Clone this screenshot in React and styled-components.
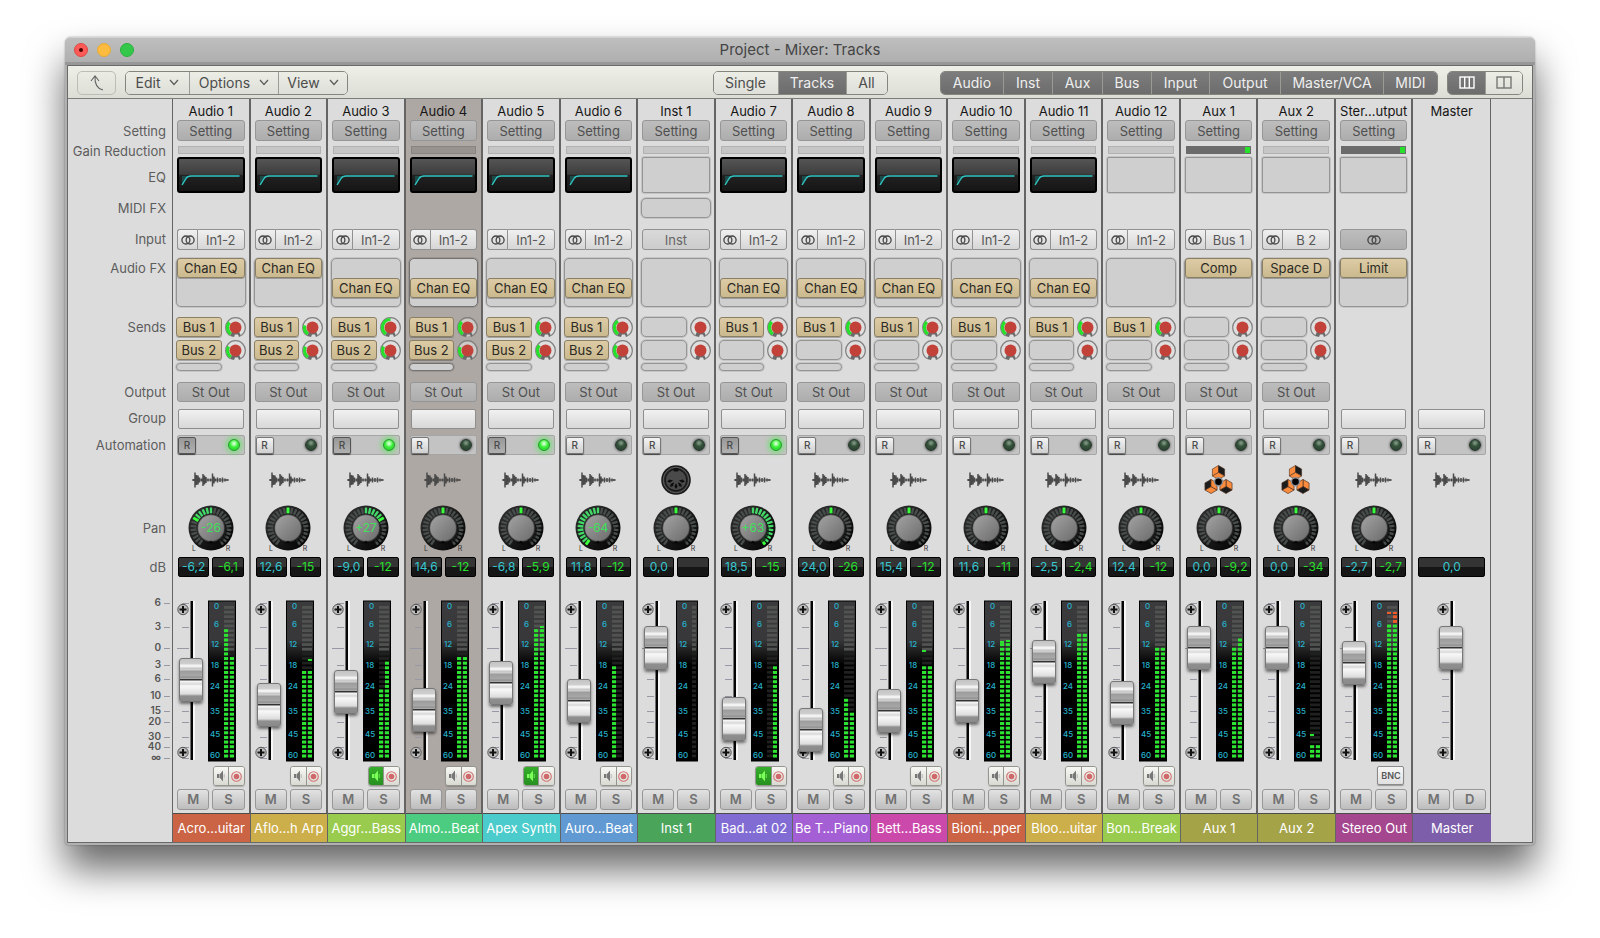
import React, {useState} from 'react';
import styled, {createGlobalStyle, css} from 'styled-components';

const colors = {
  panel: '#dcdcdc',
  selected: '#aea8a4',
  line: '#646464',
  text: '#4f4f4f',
  label: '#5c5c5c',
  cyan: '#35c6cf',
  green: '#26e02c'
};

const FONT = "Inter, 'Liberation Sans', Arial, sans-serif";

// one height per mixer row, shared by the label column and every strip
const ROWS = '21px 21px 16px 36px 31px 31px 57px 65px 29px 26px 28px 40px 55px 45px 162px 27px 24px 29px';

const GlobalStyle = createGlobalStyle`
  * { box-sizing: border-box; }
  body { margin: 0; background: #fff; font-family: ${FONT}; }
  button { font: inherit; padding: 0; margin: 0; cursor: pointer; }
  svg { display: block; flex: none; }
`;

const Page = styled.main`
  padding: 37px 65px 93px;
`;

const Window = styled.section`
  padding: 0 2px 2px;
  border-radius: 6px 6px 4px 4px;
  background: #b0b0b0;
  box-shadow: 0 0 2px rgba(0, 0, 0, 0.35), 0 24px 38px rgba(0, 0, 0, 0.6);
`;

const TitleBar = styled.header`
  display: grid;
  grid-template-columns: 1fr auto 1fr;
  align-items: center;
  height: 28px;
  margin: 0 -2px;
  padding: 0 9px;
  border-radius: 6px 6px 0 0;
  border-top: 1px solid #d2d2d2;
  border-bottom: 3px solid #979797;
  background: linear-gradient(#bebebe, #afafaf);
`;

const Title = styled.h1`
  margin: 0;
  font-size: 15px;
  line-height: 20px;
  font-weight: 400;
  color: #454545;
`;

const Lights = styled.div`
  display: flex;
  gap: 9px;
`;

const Light = styled.button`
  display: flex;
  align-items: center;
  justify-content: center;
  width: 14px;
  height: 14px;
  border: 1px solid ${(props) => props.$edge};
  border-radius: 50%;
  background: ${(props) => props.$color};
`;

const LightDot = styled.span`
  width: 4px;
  height: 4px;
  border-radius: 50%;
  background: #4a0303;
`;

const Content = styled.div`
  border: 1px solid #6a6a6a;
  background: ${colors.panel};
`;

const Toolbar = styled.nav`
  display: grid;
  grid-template-columns: 1fr auto 1fr;
  align-items: center;
  height: 33px;
  padding: 1px 9px 0;
  border-bottom: 1px solid #7c7c7c;
  background: linear-gradient(#eef0e8, #dcddd5);
`;

const ToolSide = styled.div`
  display: flex;
  gap: 9px;
  justify-content: ${(props) => (props.$end ? 'flex-end' : 'flex-start')};
`;

const Group = styled.div`
  display: flex;
  height: 24px;
  overflow: hidden;
  border: 1px solid #85857f;
  border-radius: 5px;
`;

const GroupButton = styled.button`
  display: flex;
  align-items: center;
  justify-content: center;
  gap: 9px;
  width: ${(props) => props.$w}px;
  border: 0;
  border-left: 1px solid #9b9b95;
  background: ${(props) => (props.$on ? 'linear-gradient(#7d7d7d, #6c6c6c)' : 'linear-gradient(#eceee6, #dedfd8)')};
  color: ${(props) => (props.$on ? '#efefef' : '#4c4c4c')};
  font-size: 14px;
  line-height: 20px;
  white-space: nowrap;

  &:first-child { border-left: 0; }
`;

const BackButton = styled.button`
  display: flex;
  align-items: center;
  justify-content: center;
  width: 39px;
  height: 24px;
  border: 1px solid #bcbdb6;
  border-radius: 5px;
  background: transparent;
`;

const Mixer = styled.div`
  display: grid;
  grid-template-columns: 105px repeat(17, minmax(0, 1fr)) 41px;
`;

const LabelColumn = styled.div`
  display: grid;
  grid-template-rows: ${ROWS};
  border-right: 1px solid ${colors.line};
`;

const RowLabel = styled.div`
  padding-right: 6px;
  padding-top: ${(props) => props.$top || 0}px;
  color: ${colors.label};
  font-size: 13px;
  line-height: 21px;
  text-align: right;
  white-space: nowrap;
`;

const Strip = styled.section`
  display: grid;
  grid-template-rows: ${ROWS};
  grid-template-columns: minmax(0, 1fr);
  min-width: 0;
  border-right: 2px solid ${colors.line};
  background: ${(props) => (props.$selected ? colors.selected : colors.panel)};
  --slot-line: ${(props) => (props.$selected ? '#727272' : '#949494')};
  --gr: ${(props) => (props.$selected ? '#99938f' : '#c6c6c6')};

  &:nth-last-child(2) { border-right-width: 1px; }
`;

const Cell = styled.div`
  display: flex;
  justify-content: ${(props) => props.$justify || 'stretch'};
  align-items: ${(props) => props.$align || 'flex-start'};
  gap: ${(props) => props.$gap || 0}px;
  min-width: 0;
  padding: ${(props) => props.$top || 0}px ${(props) => props.$side || 4}px 0;
`;

const StripName = styled.h2`
  flex: 1;
  margin: 0;
  padding-top: 2px;
  font-size: 13px;
  line-height: 21px;
  font-weight: 400;
  color: #161616;
  text-align: center;
  white-space: nowrap;
`;

const tones = {
  dark: css`
    border: 1px solid #969696;
    background: linear-gradient(#bdbdbd, #adadad);
    color: ${colors.text};
  `,
  light: css`
    border: 1px solid #919191;
    background: linear-gradient(#f0f0f0, #d6d6d6);
    color: #585858;
  `,
  gold: css`
    border: 1px solid #8b7f63;
    background: linear-gradient(#dccba5, #cbb98f);
    box-shadow: 0 1px 0 rgba(0, 0, 0, 0.25);
    color: #2c2a24;
  `,
  flat: css`
    border: 1px solid #919191;
    background: linear-gradient(#d9d9d9, #cccccc);
    color: #666;
  `
};

const Button = styled.button`
  display: flex;
  flex: 1;
  align-items: center;
  justify-content: center;
  min-width: 0;
  height: ${(props) => props.$h || 21}px;
  border-radius: 3px;
  font-size: 13px;
  line-height: 16px;
  white-space: nowrap;
  ${(props) => tones[props.$tone]}
`;

const InputPair = styled.div`
  display: flex;
  flex: 1;

  ${Button}:first-child {
    flex: 0 0 20px;
    border-right: 0;
    border-radius: 3px 0 0 3px;
  }
  ${Button}:last-child { border-radius: 0 3px 3px 0; }
`;

const Reduction = styled.div`
  display: flex;
  flex: 1;
  justify-content: flex-end;
  height: 8px;
  border: 1px solid ${(props) => (props.$active ? '#6b6b6b' : 'rgba(0, 0, 0, 0.1)')};
  background: ${(props) => (props.$active ? '#6b6b6b' : 'var(--gr)')};
`;

const ReductionLevel = styled.span`
  width: 5px;
  background: ${colors.green};
`;

const EqFrame = styled.button`
  flex: 1;
  height: 36px;
  overflow: hidden;
  border: 2px solid #000;
  border-radius: 3px;
  background: linear-gradient(#555 0%, #3d3d3d 48%, #222 50%, #151515 100%);

  svg { width: 100%; }
`;

const Empty = styled.button`
  flex: 1;
  height: ${(props) => props.$h}px;
  border: 1px solid var(--slot-line);
  border-radius: ${(props) => props.$r || 5}px;
  box-shadow: 0 0 0 1px rgba(0, 0, 0, 0.1);
  background: #cfcfcf;
`;

const FxSlot = styled.div`
  display: flex;
  flex-direction: column;
  flex: 1;
  height: 49px;
  border: 1px solid var(--slot-line);
  border-radius: 5px;
  box-shadow: 0 0 0 1px rgba(0, 0, 0, 0.1);
  padding-top: ${(props) => (props.$second ? 20 : 0)}px;
  background: #cfcfcf;

  ${Button} {
    flex: none;
    margin-top: -1px;
  }
`;

const Sends = styled.div`
  display: grid;
  flex: 1;
  grid-template-columns: minmax(0, 1fr) 21px;
  grid-template-rows: 20px 20px 9px;
  gap: 3px;

  > * { width: 100%; }
`;

const GroupBox = styled.button`
  flex: 1;
  height: 20px;
  border: 1px solid #8e8e8e;
  border-radius: 2px;
  background: linear-gradient(#f1f1f1, #d8d8d8);
`;

const AutoBox = styled.div`
  display: flex;
  flex: 1;
  align-items: center;
  justify-content: space-between;
  height: 20px;
  padding: 0 4px 0 0;
  border: 1px solid #a5a5a5;
  border-radius: 2px;
  background: #c3c3c3;
`;

const AutoButton = styled.button`
  width: 18px;
  height: 17px;
  border: 1px solid ${(props) => (props.$on ? '#555' : '#777')};
  border-radius: 2px;
  box-shadow: 0 1px 1px rgba(0, 0, 0, 0.6);
  background: ${(props) => (props.$on ? 'linear-gradient(#999, #b0b0b0)' : 'linear-gradient(#f4f4f4, #cfcfcf)')};
  color: #4a4a4a;
  font-size: 10px;
  font-weight: 500;
  line-height: 14px;
`;

const Led = styled.span`
  width: 12px;
  height: 12px;
  border: 1px solid ${(props) => (props.$on ? '#249a2a' : '#24332a')};
  border-radius: 50%;
  background: ${(props) =>
    props.$on
      ? 'radial-gradient(circle at 50% 35%, #c8ffc4 0 12%, #3df03c 45%, #20c526 100%)'
      : 'radial-gradient(circle at 50% 30%, #79907d 0 10%, #35523b 40%, #263c2b 100%)'};
  box-shadow: ${(props) => (props.$on ? '0 0 5px 2px rgba(70, 240, 70, 0.6)' : '0 0 2px 1px rgba(90, 90, 90, 0.6)')};
`;

const Readout = styled.output`
  flex: 1;
  min-width: 0;
  height: 20px;
  border: 1px solid #000;
  border-radius: 2px;
  background: linear-gradient(#343434 50%, #161616 50%);
  color: ${(props) => (props.$peak ? colors.green : colors.cyan)};
  font-size: 12px;
  line-height: 18px;
  text-align: center;
  white-space: nowrap;
`;

const FaderRow = styled.div`
  display: flex;
  justify-content: center;
  min-width: 0;
`;

const FaderWell = styled.label`
  position: relative;
  flex: none;
  width: 32px;
  height: 162px;
`;

const thumb = css`
  width: 24px;
  height: 44px;
  border: 1px solid #777;
  border-radius: 3px;
  box-shadow: 0 2px 3px rgba(0, 0, 0, 0.5);
  background: linear-gradient(
    #c4c4c4 0, #cfcfcf 5px, #f4f4f4 6px, #f0f0f0 8px, #c6c6c6 9px, #d0d0d0 11px,
    #9c9c9c 12px, #a8a8a8 17px, #8e8e8e 18px, #b2b2b2 20px, #333 20px, #333 21px,
    #fafafa 22px, #d8d8d8 25px, #f8f8f8 27px, #e8e8e8 32px, #dcdcdc 35px,
    #8f8f8f 37px, #8a8a8a 100%
  );
`;

// the thumb's centre runs over the scale, so the input is half a thumb longer at each end
const FaderInput = styled.input`
  position: absolute;
  top: -19px;
  left: 3px;
  width: 24px;
  height: 198px;
  margin: 0;
  appearance: none;
  background: transparent;
  writing-mode: vertical-lr;
  direction: rtl;

  &::-webkit-slider-runnable-track { width: 24px; background: transparent; }
  &::-webkit-slider-thumb { appearance: none; ${thumb} }
  &::-moz-range-thumb { ${thumb} }
`;

const MeterSlot = styled.div`
  display: flex;
  flex: none;
  justify-content: center;
  width: 28px;
  margin-right: 9px;
`;

const MonitorPair = styled.div`
  display: flex;
  width: 32px;
  height: 20px;
  overflow: hidden;
  border: 1px solid #95958f;
  border-radius: 3px;
  box-shadow: 0 1px 1px rgba(0, 0, 0, 0.2);
`;

const MonitorButton = styled.button`
  display: flex;
  flex: 1;
  align-items: center;
  justify-content: center;
  border: 0;
  background: ${(props) => (props.$on ? 'linear-gradient(#35ad2a, #279020)' : 'linear-gradient(#f7f7f4, #dadad3)')};

  & + & { border-left: 1px solid #95958f; }
`;

const BounceButton = styled.button`
  width: 27px;
  height: 19px;
  margin-right: 3px;
  border: 1px solid #8a8a8a;
  border-radius: 2px;
  box-shadow: 0 1px 1px rgba(0, 0, 0, 0.3);
  background: linear-gradient(#f7f7f7, #e0e0e0);
  color: #555;
  font-size: 9px;
  font-weight: 600;
  line-height: 14px;
`;

const MuteButton = styled.button`
  flex: 1;
  height: 21px;
  border: 1px solid #979797;
  border-radius: 3px;
  background: linear-gradient(#e2e2e2, #bdbdbd);
  color: #717171;
  font-size: 13px;
  font-weight: 600;
  line-height: 19px;
`;

const Plate = styled.div`
  margin-right: -1px;
  border-top: 1px solid #4c4c4c;
  background: ${(props) => props.$color};
  color: #fff;
  font-size: 13px;
  line-height: 28px;
  text-align: center;
  white-space: nowrap;
`;

/* Drawings */

const Chevron = () => (
  <svg width="10" height="7" viewBox="0 0 10 7" fill="none" stroke="#5a5a5a" strokeWidth="1.2">
    <path d="M1 1l4 4.5L9 1" />
  </svg>
);

const BackArrow = () => (
  <svg width="14" height="16" viewBox="0 0 14 16" fill="none" stroke="#666" strokeWidth="1.1">
    <path d="M1 6L5 1l4 5M5 1c-.4 7 1 12.500 8 14" />
  </svg>
);

const Columns = ({count, color}) => (
  <svg width="16" height="13" viewBox="0 0 16 13" fill="none" stroke={color} strokeWidth="1.4">
    <rect x="1" y="1" width="14" height="11" />
    {count === 3 ? <path d="M5.700 1v11M10.300 1v11" /> : <path d="M8 1v11" />}
  </svg>
);

const StereoIcon = () => (
  <svg width="14" height="10" viewBox="0 0 14 10" fill="none" stroke="#444" strokeWidth="1.3">
    <circle cx="4.900" cy="5" r="4" />
    <circle cx="9.100" cy="5" r="4" />
  </svg>
);

const EqCurve = () => (
  <svg height="32" viewBox="0 0 63 32" preserveAspectRatio="none">
    <path d="M3 17h7q-2 1-6 9H3z" fill="#1c4a49" />
    <path d="M3 26L7 19.500Q8.500 17 12 17H60" fill="none" stroke="#2fc4c2" strokeWidth="1.400" />
  </svg>
);

const WAVE = [
  [1.5, 1], [3, 7.5], [4.5, 5], [6, 4.5], [7.5, 2.5], [9.5, 1.5], [11, 6], [12.5, 4.5], [14, 3], [16, 1.5],
  [18.5, 1.5], [20.5, 6.5], [22, 3.5], [23.5, 1.5], [25.5, 2.5], [28, 2], [30.5, 2.5], [33, 1.5], [35, 1]
];

const WaveIcon = () => (
  <svg width="38" height="16" viewBox="0 0 38 16" stroke="#4a4a4a">
    <path d="M0 8h37" strokeWidth="1.200" />
    <path d={WAVE.map(([x, h]) => `M${x} ${8 - h}v${h * 2}`).join('')} strokeWidth="1.500" />
  </svg>
);

const PINS = [-80, -40, 0, 40, 80];

const MidiIcon = () => (
  <svg width="30" height="30" viewBox="-15 -15 30 30">
    <circle r="14.800" fill="#1a1a1a" />
    <circle r="12.800" fill="#333" stroke="#6a6a6a" strokeWidth="0.800" />
    <circle r="10.800" fill="#4a4a4a" stroke="#161616" strokeWidth="1.200" />
    <rect x="-2.500" y="-12" width="5" height="3.500" rx="1" fill="#111" />
    {PINS.map((a) => (
      <path key={a} d="M0 3L1.600 6.500 0 9-1.600 6.500z" fill="#0d0d0d" transform={`rotate(${a})`} />
    ))}
  </svg>
);

const Cube = ({x, y, turn}) => (
  <g transform={`translate(${x} ${y}) rotate(${turn})`} stroke="#4d3020" strokeWidth="0.600" strokeLinejoin="round">
    <path d="M0 0V-7L-6.100-3.500V3.500z" fill="#fb8b3d" />
    <path d="M0 0V-7L6.100-3.500V3.500z" fill="#1c1c1c" />
    <path d="M0 0L6.100 3.500 0 7-6.100 3.500z" fill="#fb8b3d" />
  </g>
);

const CubesIcon = () => (
  <svg width="30" height="30" viewBox="0 0 30 30">
    <Cube x={14.5} y={7.5} turn={0} />
    <Cube x={22} y={21.5} turn={120} />
    <Cube x={7} y={21.5} turn={240} />
    <circle cx="14.500" cy="16.800" r="4" fill="#000" stroke="#8b8f96" strokeWidth="1.400" />
  </svg>
);

const icons = {wave: WaveIcon, midi: MidiIcon, cubes: CubesIcon};

const polar = (r, deg) => {
  const a = (deg * Math.PI) / 180;
  return [(r * Math.sin(a)).toFixed(2), (-r * Math.cos(a)).toFixed(2)];
};

const arc = (r, from, to) =>
  `M${polar(r, from).join(' ')}A${r} ${r} 0 ${to - from > 180 ? 1 : 0} 1 ${polar(r, to).join(' ')}`;

const SendKnob = ({level, name}) => (
  <svg width="21" height="21" viewBox="-10.500 -10.500 21 21" role="img" aria-label={name}>
    <circle r="9" fill="rgba(225,225,225,.6)" />
    <path d={arc(9.8, -145, 145)} fill="none" stroke="#7f7f7f" strokeWidth="1.200" />
    <path d="M-5.500 8.500L-3.500 4h7l2 4.500-2 1-1-2.500h-3l-1 2.500z" fill="#6a6a6a" />
    {level !== undefined && <path d={arc(8, -145, level)} fill="none" stroke={colors.green} strokeWidth="3.200" />}
    <circle r="6" fill="#c2423a" />
  </svg>
);

const TICKS = Array.from({length: 25}, (_, i) => (i - 12) * 12);

const tickColor = (tick, target) => {
  if (tick === target) return '#39ff3c';
  const lit = target < 0 ? tick > target && tick <= 0 : tick < target && tick >= 0;
  return lit ? '#43d868' : '#474d4a';
};

const PanKnob = ({value = 0}) => {
  const target = Math.max(-144, Math.min(144, Math.round((value * 2.3) / 12) * 12));
  return (
    <svg width="46" height="52" viewBox="-23 -26 46 52" role="img" aria-label={`Pan ${value}`}>
      <defs>
        <linearGradient id="cap" x1="0" y1="0" x2="1" y2="1">
          <stop offset="0" stopColor="#a3a3a3" />
          <stop offset="1" stopColor="#6c6c6c" />
        </linearGradient>
        <linearGradient id="rim" x1="0" y1="0" x2="1" y2="1">
          <stop offset="0" stopColor="#333" />
          <stop offset="0.600" stopColor="#161616" />
          <stop offset="1" stopColor="#000" />
        </linearGradient>
      </defs>
      <circle r="22.500" fill="url(#rim)" />
      {TICKS.map((tick) => (
        <rect
          key={tick}
          x={tick === target ? -1.5 : -1.2}
          y="-20.500"
          width={tick === target ? 3 : 2.4}
          height="6"
          rx="0.500"
          fill={tickColor(tick, target)}
          transform={`rotate(${tick})`}
        />
      ))}
      <circle cx="2" cy="2.500" r="14" fill="#0c0c0c" opacity="0.700" />
      <circle r="14" fill="#5b5b5b" stroke="#222" strokeWidth="0.800" />
      <circle r="12.800" fill="url(#cap)" />
      <path d="M-2 15L0 12.500 2 15z" fill="#000" />
      {value !== 0 && (
        <text y="4" textAnchor="middle" fontSize="12" fill="#3fe05c">
          {value > 0 ? `+${value}` : value}
        </text>
      )}
      <text x="-17" y="23" textAnchor="middle" fontSize="7" fill="#333">L</text>
      <text x="17" y="23" textAnchor="middle" fontSize="7" fill="#333">R</text>
    </svg>
  );
};

const SCALE = [
  ['6', 3], ['3', 27], ['0', 48], ['3', 65], ['6', 79], ['10', 96], ['15', 111], ['20', 122], ['30', 137],
  ['40', 147], ['∞', 158]
];

const ScaleDrawing = styled.svg`
  margin-top: -8px;
`;

const DbScale = () => (
  <ScaleDrawing width="104" height="178" viewBox="0 -8 104 178">
    {SCALE.map(([text, y], i) => (
      <g key={i}>
        <text x="93" y={y + 3} textAnchor="end" fontSize="10" fontWeight="600" fill="#555">{text}</text>
        <path d={`M96 ${y + 0.5}h6`} stroke="#9898a4" />
      </g>
    ))}
  </ScaleDrawing>
);

const Screw = ({y}) => (
  <g transform={`translate(7 ${y})`}>
    <circle r="5.200" fill="#bdbdbd" stroke="#555" />
    <path d="M0-3.500v7M-3.500 0h7" stroke="#111" strokeWidth="2" />
  </g>
);

const FaderTrack = () => (
  <svg width="32" height="162" viewBox="0 0 32 162">
    {SCALE.map(([, y], i) => (
      <path key={i} d={`M${i === 2 ? 1 : 6} ${y + 0.5}H13`} stroke="#9898a4" />
    ))}
    <rect x="17" y="1" width="2" height="159" fill="#f7f7f7" />
    <rect x="14.500" y="1" width="2.500" height="159" fill="#050505" />
    <Screw y={9.5} />
    <Screw y={152.5} />
  </svg>
);

const METER = [[0, 6], [6, 24], [12, 44], [18, 65], [24, 86], [35, 111], [45, 134], [60, 155]];
const SEGMENTS = Array.from({length: 33}, (_, i) => 154.5 - i * 4.64);

// levels are distances from the top of the meter to the top of the bar
const Bar = ({x, level, peak}) => (
  <g>
    {level !== undefined && SEGMENTS.filter((y) => y > level - 2).map((y) => (
      <rect key={y} x={x} y={y} width="4" height="3" fill={y < 24 ? '#f0592a' : '#2be531'} />
    ))}
    {peak !== undefined && <rect x={x} y={peak - 1} width="4" height="2" fill={peak < 24 ? '#f0592a' : '#2be531'} />}
  </g>
);

const Meter = ({mono, left = [], right = []}) => {
  const width = mono ? 22 : 28;
  return (
    <svg width={width} height="162" viewBox={`0 0 ${width} 162`}>
      <defs>
        <linearGradient id="well" x1="0" y1="0" x2="0" y2="1">
          <stop offset="0" stopColor="#3b3b3d" />
          <stop offset="0.240" stopColor="#38383a" />
          <stop offset="0.400" stopColor="#000" />
        </linearGradient>
      </defs>
      <rect x="0.500" y="1" width={width - 1} height="160" fill="url(#well)" stroke="#000" />
      {SEGMENTS.map((y) => (
        <rect key={y} x="16" y={y} width={mono ? 4 : 10} height="2.800" fill={y < 50 ? '#505350' : '#1f211f'} />
      ))}
      <Bar x={16} level={left[0]} peak={left[1]} />
      {!mono && <Bar x={22} level={right[0]} peak={right[1]} />}
      {METER.map(([db, y]) => (
        <text
          key={db}
          x={db < 10 ? 8.5 : 7}
          y={y + 3}
          textAnchor="middle"
          fontSize="8"
          fontWeight="500"
          fill="#25b3cd"
        >
          {db}
        </text>
      ))}
    </svg>
  );
};

const Speaker = ({on}) => (
  <svg width="8" height="12" viewBox="0 0 8 12" fill={on ? '#7dff5a' : '#777'}>
    <path d="M0 4h2.500v4H0zM3 4L6 .5v11L3 8z" />
    <path d="M7.200 4v4" stroke={on ? '#7dff5a' : '#aaa'} strokeWidth="0.800" />
  </svg>
);

const Record = () => (
  <svg width="11" height="11" viewBox="-5.500 -5.500 11 11">
    <circle r="4.800" fill="none" stroke="#d27272" strokeWidth="1.100" />
    <circle r="2.800" fill="#cf6868" />
  </svg>
);

/* Data */

const STRIPS = [
  {name: 'Audio 1', track: 'Acro...uitar', color: '#cb6444', fx: 'Chan EQ', sends: [-50, -60], read: true, pan: -26, gain: '-6,2', peak: '-6,1', fader: 77, left: [27], right: [58]},
  {name: 'Audio 2', track: 'Aflo...h Arp', color: '#ccae4a', fx: 'Chan EQ', sends: [-75, -62], gain: '12,6', peak: '-15', fader: 52, left: [72], right: [71, 60]},
  {name: 'Audio 3', track: 'Aggr...Bass', color: '#98cb4e', fx: 'Chan EQ', low: true, sends: [0, -60], read: true, pan: 27, gain: '-9,0', peak: '-12', fader: 65, left: [91], right: [63]},
  {name: 'Audio 4', track: 'Almo...Beat', color: '#4ccc80', fx: 'Chan EQ', low: true, sends: [-45, -65], gain: '14,6', peak: '-12', fader: 47, left: [58], right: [59], selected: true},
  {name: 'Audio 5', track: 'Apex Synth', color: '#4bcbcb', fx: 'Chan EQ', low: true, sends: [-45, -50], read: true, gain: '-6,8', peak: '-5,9', fader: 74, left: [31], right: [31, 27]},
  {name: 'Audio 6', track: 'Auro...Beat', color: '#6199d3', fx: 'Chan EQ', low: true, sends: [-35, -50], pan: -64, gain: '11,8', peak: '-12', fader: 56, left: [68]},
  {name: 'Inst 1', track: 'Inst 1', color: '#4aa45a', kind: 'inst', input: 'Inst', icon: 'midi', sends: [], gain: '0,0', peak: '', fader: 109},
  {name: 'Audio 7', track: 'Bad...at 02', color: '#816cd4', fx: 'Chan EQ', low: true, sends: [-45], read: true, pan: 63, gain: '18,5', peak: '-15', fader: 38, right: [67]},
  {name: 'Audio 8', track: 'Be T...Piano', color: '#a55fd5', fx: 'Chan EQ', low: true, sends: [-45], gain: '24,0', peak: '-26', fader: 27, left: [100], right: [111]},
  {name: 'Audio 9', track: 'Bett...Bass', color: '#cc49ac', fx: 'Chan EQ', low: true, sends: [-45], gain: '15,4', peak: '-12', fader: 46, left: [67, 51], right: [67]},
  {name: 'Audio 10', track: 'Bioni...pper', color: '#cb6444', fx: 'Chan EQ', low: true, sends: [-45], gain: '11,6', peak: '-11', fader: 56, left: [45, 42], right: [45, 41]},
  {name: 'Audio 11', track: 'Bloo...uitar', color: '#ccae4a', fx: 'Chan EQ', low: true, sends: [-45], gain: '-2,5', peak: '-2,4', fader: 95, left: [35], right: [35]},
  {name: 'Audio 12', track: 'Bon...Break', color: '#98cb4e', sends: [-45], gain: '12,4', peak: '-12', fader: 54, left: [49], right: [49]},
  {name: 'Aux 1', track: 'Aux 1', color: '#a5a348', kind: 'aux', input: 'Bus 1', icon: 'cubes', fx: 'Comp', sends: [], gain: '0,0', peak: '-9,2', fader: 109, left: [49], right: [39], reducing: true},
  {name: 'Aux 2', track: 'Aux 2', color: '#a5a348', kind: 'aux', input: 'B 2', icon: 'cubes', fx: 'Space D', sends: [], gain: '0,0', peak: '-34', fader: 109, left: [144, 135], right: [144]},
  {name: 'Ster...utput', track: 'Stereo Out', color: '#a4478f', kind: 'output', fx: 'Limit', gain: '-2,7', peak: '-2,7', fader: 94, left: [22, 13], right: [17, 13], reducing: true},
  {name: 'Master', track: 'Master', color: '#7c5eab', kind: 'master', gain: '0,0', fader: 109}
];

const MONITORED = ['Audio 3', 'Audio 5', 'Audio 7'];

const LABELS = [
  ['', 0], ['Setting', 1], ['Gain Reduction', -1], ['EQ', 10], ['MIDI FX', 5], ['Input', 5], ['Audio FX', 3],
  ['Sends', 5], ['Output', 5], ['Group', 2], ['Automation', 3], ['', 0], ['Pan', 18], ['dB', 2]
];

/* Parts */

const InputCell = ({kind = 'audio', input = 'In1-2'}) => {
  if (kind === 'inst') return <Button $tone="flat">{input}</Button>;
  if (kind === 'output') return <Button $tone="dark" aria-label="Stereo format"><StereoIcon /></Button>;
  return (
    <InputPair>
      <Button $tone="light" aria-label="Stereo format"><StereoIcon /></Button>
      <Button $tone="light">{input}</Button>
    </InputPair>
  );
};

const SendsCell = ({sends}) => (
  <Sends>
    {[0, 1].map((i) => (
      <React.Fragment key={i}>
        {sends[i] === undefined
          ? <Empty $h={20} aria-label={`Empty send ${i + 1}`} />
          : <Button $tone="gold" $h={20}>Bus {i + 1}</Button>}
        <SendKnob level={sends[i]} name={`Send ${i + 1} level`} />
      </React.Fragment>
    ))}
    <Empty $h={8} aria-label="Add send" />
  </Sends>
);

const Fader = ({name, start}) => {
  const [value, setValue] = useState(start);
  return (
    <FaderWell>
      <FaderTrack />
      <FaderInput
        type="range"
        min="0"
        max="154"
        value={value}
        aria-label={`${name} volume`}
        onChange={(e) => setValue(Number(e.target.value))}
      />
    </FaderWell>
  );
};

const ChannelStrip = ({channel}) => {
  const {name, kind = 'audio', icon = 'wave', fx, sends, selected} = channel;
  const Icon = icons[icon];
  const isMaster = kind === 'master';
  const hasEq = kind === 'audio' && fx;

  return (
    <Strip $selected={selected} aria-label={name}>
      <Cell><StripName>{name}</StripName></Cell>
      <Cell>{!isMaster && <Button $tone="dark">Setting</Button>}</Cell>
      <Cell $top={5} $side={5}>
        {!isMaster && <Reduction $active={channel.reducing}>{channel.reducing && <ReductionLevel />}</Reduction>}
      </Cell>
      <Cell>
        {hasEq && <EqFrame aria-label="Channel EQ"><EqCurve /></EqFrame>}
        {!hasEq && !isMaster && <Empty $h={36} $r={2} aria-label="Empty EQ" />}
      </Cell>
      <Cell $top={5} $side={3}>{kind === 'inst' && <Empty $h={20} aria-label="Empty MIDI effect" />}</Cell>
      <Cell $top={5}>{!isMaster && <InputCell kind={kind} input={channel.input} />}</Cell>
      <Cell $top={3} $side={3}>
        {!isMaster && (
          <FxSlot $second={channel.low}>
            {fx && <Button $tone="gold" $h={20}>{fx}</Button>}
          </FxSlot>
        )}
      </Cell>
      <Cell $top={5} $side={3}>{sends && <SendsCell sends={sends} />}</Cell>
      <Cell $top={5}>{sends && <Button $tone="dark" $h={20}>St Out</Button>}</Cell>
      <Cell $top={3} $side={5}><GroupBox aria-label="Group" /></Cell>
      <Cell $top={3}>
        <AutoBox>
          <AutoButton $on={channel.read} aria-pressed={Boolean(channel.read)}>R</AutoButton>
          <Led $on={channel.read} />
        </AutoBox>
      </Cell>
      <Cell $justify="center" $align="center"><Icon /></Cell>
      <Cell $justify="center" $align="center">{!isMaster && <PanKnob value={channel.pan} />}</Cell>
      <Cell $top={2} $side={5} $gap={3}>
        <Readout>{channel.gain}</Readout>
        {!isMaster && <Readout $peak>{channel.peak}</Readout>}
      </Cell>
      <FaderRow>
        <Fader name={name} start={channel.fader} />
        {!isMaster && (
          <MeterSlot>
            <Meter mono={kind === 'inst'} left={channel.left} right={channel.right} />
          </MeterSlot>
        )}
      </FaderRow>
      <Cell $top={4} $justify="flex-end">
        {kind === 'audio' && (
          <MonitorPair>
            <MonitorButton $on={MONITORED.includes(name)} aria-label="Input monitoring">
              <Speaker on={MONITORED.includes(name)} />
            </MonitorButton>
            <MonitorButton aria-label="Record enable"><Record /></MonitorButton>
          </MonitorPair>
        )}
        {kind === 'output' && <BounceButton>BNC</BounceButton>}
      </Cell>
      <Cell $gap={3}>
        <MuteButton>M</MuteButton>
        <MuteButton>{isMaster ? 'D' : 'S'}</MuteButton>
      </Cell>
      <Plate $color={channel.color}>{channel.track}</Plate>
    </Strip>
  );
};

const MENUS = [['Edit', 63], ['Options', 89], ['View', 69]];
const MODES = [['Single', 64], ['Tracks', 68], ['All', 41]];
const FILTERS = [
  ['Audio', 62], ['Inst', 49], ['Aux', 50], ['Bus', 49], ['Input', 58], ['Output', 71], ['Master/VCA', 103], ['MIDI', 54]
];

const App = () => {
  const [mode, setMode] = useState('Tracks');

  return (
    <Page>
      <GlobalStyle />
      <Window>
        <TitleBar>
          <Lights>
            <Light $color="#fc5b57" $edge="#e2463f" aria-label="Close"><LightDot /></Light>
            <Light $color="#fdbc40" $edge="#e6a935" aria-label="Minimise" />
            <Light $color="#34c84a" $edge="#2bb03d" aria-label="Zoom" />
          </Lights>
          <Title>Project - Mixer: Tracks</Title>
        </TitleBar>
        <Content>
          <Toolbar>
            <ToolSide>
              <BackButton aria-label="Up one level"><BackArrow /></BackButton>
              <Group>
                {MENUS.map(([text, w]) => (
                  <GroupButton key={text} $w={w} aria-haspopup="menu">{text}<Chevron /></GroupButton>
                ))}
              </Group>
            </ToolSide>
            <Group>
              {MODES.map(([text, w]) => (
                <GroupButton key={text} $w={w} $on={mode === text} onClick={() => setMode(text)}>{text}</GroupButton>
              ))}
            </Group>
            <ToolSide $end>
              <Group>
                {FILTERS.map(([text, w]) => (
                  <GroupButton key={text} $w={w} $on aria-pressed="true">{text}</GroupButton>
                ))}
              </Group>
              <Group>
                <GroupButton $w={37} $on aria-label="Narrow strips"><Columns count={3} color="#fff" /></GroupButton>
                <GroupButton $w={37} aria-label="Wide strips"><Columns count={2} color="#777" /></GroupButton>
              </Group>
            </ToolSide>
          </Toolbar>
          <Mixer>
            <LabelColumn>
              {LABELS.map(([text, top], i) => (
                <RowLabel key={i} $top={top}>{text}</RowLabel>
              ))}
              <DbScale />
            </LabelColumn>
            {STRIPS.map((channel) => (
              <ChannelStrip key={channel.name} channel={channel} />
            ))}
            <div />
          </Mixer>
        </Content>
      </Window>
    </Page>
  );
};

export default App;
